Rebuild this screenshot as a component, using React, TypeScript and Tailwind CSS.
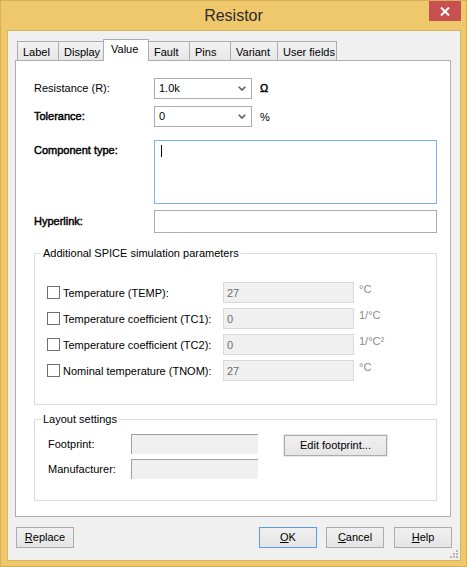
import React from 'react'

const tabs = [
  { label: 'Label', w: 'w-[42px]' },
  { label: 'Display', w: 'w-[46px]' },
  { label: 'Value', w: 'w-[46px]', active: true },
  { label: 'Fault', w: 'w-[42px]' },
  { label: 'Pins', w: 'w-[42px]' },
  { label: 'Variant', w: 'w-[48px]' },
  { label: 'User fields', w: 'w-[60px]' },
]

const spice = [
  { label: 'Temperature (TEMP):', value: '27', unit: '°C' },
  { label: 'Temperature coefficient (TC1):', value: '0', unit: '1/°C' },
  { label: 'Temperature coefficient (TC2):', value: '0', unit: '1/°C²' },
  { label: 'Nominal temperature (TNOM):', value: '27', unit: '°C' },
]

const strong = '[-webkit-text-stroke:0.45px_#000]'

function Chevron() {
  return (
    <svg width="8" height="5" viewBox="0 0 8 5" className="text-[#5c5c5c]">
      <path d="M0.7 0.7 L4 4 L7.3 0.7" fill="none" stroke="currentColor" strokeWidth="1.6" />
    </svg>
  )
}

function Combo({ value }: { value: string }) {
  return (
    <div className="flex h-[21px] w-[98px] items-center justify-between border border-[#acacac] bg-white pl-[4px] pr-[5px]">
      <span>{value}</span>
      <Chevron />
    </div>
  )
}

function Button({ children, w = 'w-[58px]', primary = false }: { children: React.ReactNode; w?: string; primary?: boolean }) {
  return (
    <div
      className={
        'flex h-[21px] items-center justify-center border bg-linear-to-b from-[#f0f0f0] to-[#e5e5e5] ' +
        w +
        (primary ? ' border-[#569de5]' : ' border-[#acacac]')
      }
    >
      {children}
    </div>
  )
}

export default function App() {
  return (
    <div className="flex h-[567px] w-[467px] flex-col border border-[#d8ae58] bg-[#f0c86c] font-['Liberation_Sans',Arial,sans-serif] text-[11px] leading-[13px] text-black">
      {/* title bar */}
      <div className="grid h-[29px] grid-cols-[1fr_auto_1fr]">
        <div />
        <div className="pt-[5px] text-[16px] leading-[19px] text-[#2b2b2b]">Resistor</div>
        <div className="flex items-start justify-end pr-[5px]">
          <div className="flex h-[20px] w-[32px] items-center justify-center bg-[#c75050]">
            <svg width="10" height="9" viewBox="0 0 10 9">
              <path d="M1 0.5 L9 8.5 M9 0.5 L1 8.5" stroke="#fff" strokeWidth="2" />
            </svg>
          </div>
        </div>
      </div>

      {/* client area */}
      <div className="relative mb-[5px] ml-[6px] mr-[5px] flex flex-1 flex-col border border-[#d9b461] bg-[#f0f0f0]">
        {/* tabs */}
        <div className="ml-[9px] mt-[8px] flex h-[21px] items-end">
          {tabs.map((t, i) =>
            t.active ? (
              <div
                key={t.label}
                className={'relative z-10 -mb-px -ml-px flex h-[22px] border border-b-0 border-[#acacac] bg-white pl-[7px] pt-[3px] ' + t.w}
              >
                {t.label}
              </div>
            ) : (
              <div
                key={t.label}
                className={
                  'flex h-[19px] items-center border border-b-0 border-[#acacac] bg-linear-to-b from-[#f3f3f3] to-[#e6e6e6] pl-[5px] pt-[2px] ' +
                  (i > 0 ? '-ml-px ' : '') +
                  t.w
                }
              >
                {t.label}
              </div>
            ),
          )}
        </div>

        {/* tab panel */}
        <div className="ml-[7px] h-[457px] w-[436px] border border-[#adadad] bg-white pl-[18px] pt-[17px]">
          <div className="flex h-[21px] items-center">
            <span className="w-[120px]">Resistance (R):</span>
            <Combo value="1.0k" />
            <span className={'ml-[8px] ' + strong}>Ω</span>
          </div>
          <div className="mt-[7px] flex h-[21px] items-center">
            <span className={'w-[120px] ' + strong}>Tolerance:</span>
            <Combo value="0" />
            <span className="ml-[8px] pt-[2px]">%</span>
          </div>
          <div className="mt-[13px] flex">
            <span className={'w-[120px] pt-[4px] ' + strong}>Component type:</span>
            <div className="h-[64px] w-[283px] border border-[#7eb4ea] bg-white pl-[6px] pt-[4px]">
              <div className="h-[12px] w-px bg-black" />
            </div>
          </div>
          <div className="mt-[6px] flex items-center">
            <span className={'w-[120px] ' + strong}>Hyperlink:</span>
            <div className="h-[23px] w-[283px] border border-[#acacac] bg-white" />
          </div>

          {/* SPICE group */}
          <fieldset className="mt-[14px] h-[158px] w-[403px] border border-[#dcdcdc]">
            <legend className="ml-[6px] px-[2px]">Additional SPICE simulation parameters</legend>
            <div className="mt-[22px] flex flex-col gap-[5px] pl-[12px]">
              {spice.map((r) => (
                <div key={r.label} className="flex h-[21px] items-center">
                  <div className="h-[13px] w-[13px] border border-[#707070] bg-white" />
                  <span className="ml-[3px] w-[160px] pt-[2px]">{r.label}</span>
                  <div className="flex h-[21px] w-[131px] items-center border border-[#d9d9d9] bg-[#f0f0f0] pl-[3px] pt-[1px] text-[#6d6d6d]">
                    {r.value}
                  </div>
                  <span className="ml-[5px] self-start pt-[1px] text-[#8a8a8a]">{r.unit}</span>
                </div>
              ))}
            </div>
          </fieldset>

          {/* Layout group */}
          <fieldset className="mt-[8px] h-[88px] w-[403px] border border-[#dcdcdc]">
            <legend className="ml-[6px] px-[2px]">Layout settings</legend>
            <div className="mt-[8px] flex items-start pl-[13px]">
              <div className="flex flex-col gap-[5px]">
                <div className="flex h-[20px] items-center">
                  <span className="w-[83px]">Footprint:</span>
                  <div className="h-[20px] w-[127px] border-l border-t border-[#a0a0a0] bg-[#f0f0f0]" />
                </div>
                <div className="flex h-[20px] items-center">
                  <span className="w-[83px]">Manufacturer:</span>
                  <div className="h-[20px] w-[127px] border-l border-t border-[#a0a0a0] bg-[#f0f0f0]" />
                </div>
              </div>
              <div className="ml-[26px] mt-[1px] shadow-[0_0_0_1px_#e8e8e8]">
                <Button w="w-[103px]">Edit footprint...</Button>
              </div>
            </div>
          </fieldset>
        </div>

        {/* bottom buttons */}
        <div className="mt-[10px] flex pl-[8px] pr-[8px]">
          <Button>
            <span>
              <span className="underline">R</span>eplace
            </span>
          </Button>
          <div className="flex-1" />
          <Button primary>
            <span>
              <span className="underline">O</span>K
            </span>
          </Button>
          <div className="ml-[9px]">
            <Button>
              <span>
                <span className="underline">C</span>ancel
              </span>
            </Button>
          </div>
          <div className="ml-[10px]">
            <Button>
              <span>
                <span className="underline">H</span>elp
              </span>
            </Button>
          </div>
        </div>

        {/* size grip */}
        <svg className="absolute bottom-[1px] right-[1px]" width="11" height="11" viewBox="0 0 11 11">
          <g fill="#b5b5b5">
            <rect x="8" y="2" width="2" height="2" />
            <rect x="5" y="5" width="2" height="2" />
            <rect x="8" y="5" width="2" height="2" />
            <rect x="2" y="8" width="2" height="2" />
            <rect x="5" y="8" width="2" height="2" />
            <rect x="8" y="8" width="2" height="2" />
          </g>
        </svg>
      </div>
    </div>
  )
}
